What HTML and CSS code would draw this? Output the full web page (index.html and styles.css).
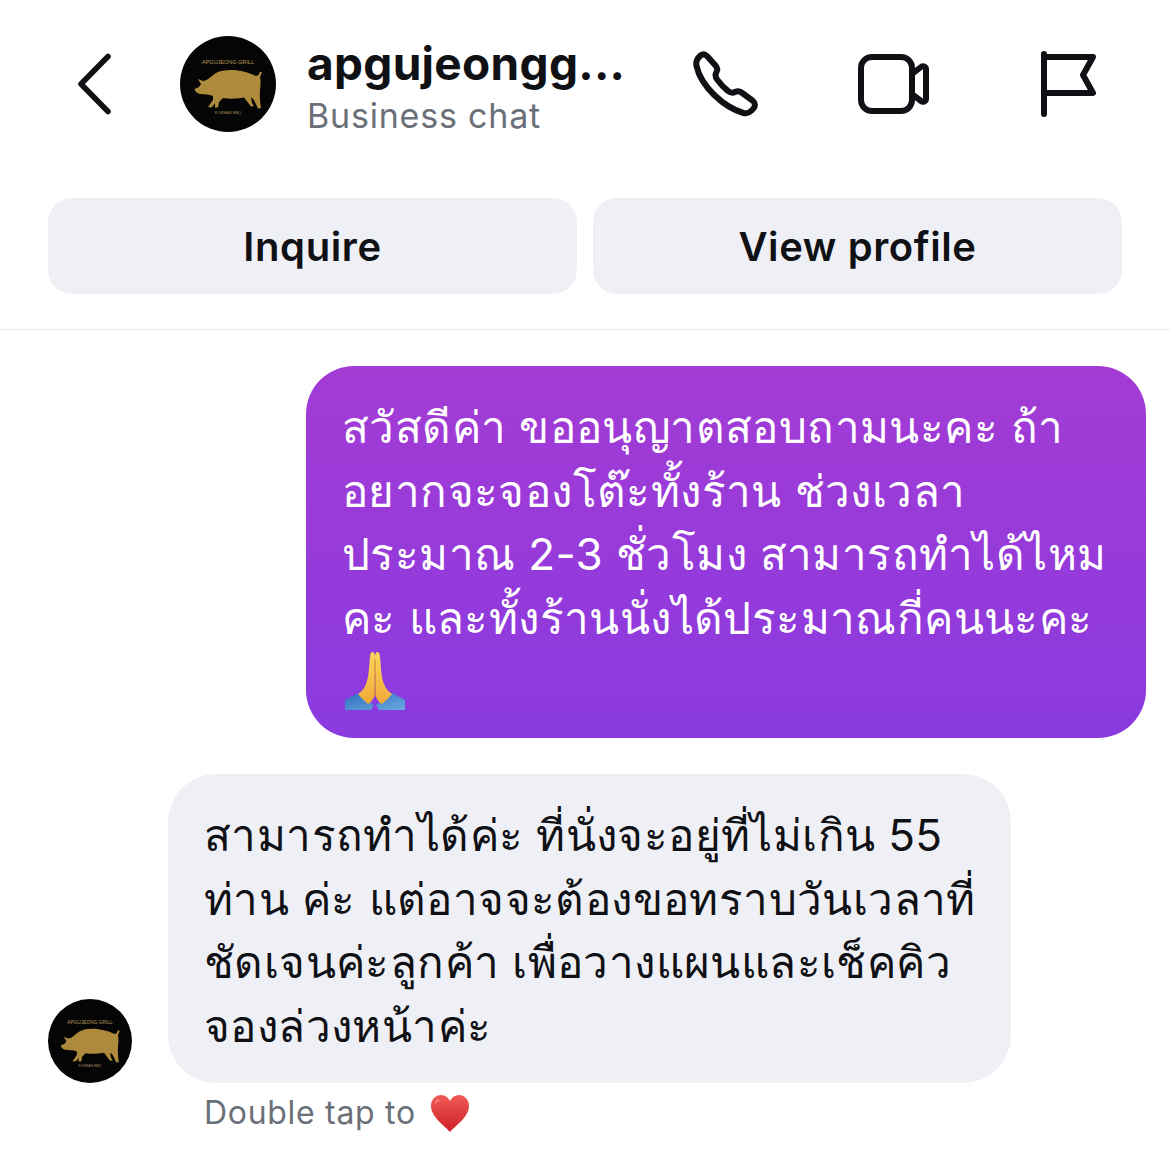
FILE: index.html
```html
<!DOCTYPE html>
<html lang="en">
<head>
    <meta charset="UTF-8">
    <meta name="viewport" content="width=device-width, initial-scale=1.0">
    <title>Business chat</title>
    <link rel="stylesheet" href="styles.css">
</head>
<body>
    <header class="topbar">
        <svg class="back-icon" width="36" height="62" viewBox="0 0 36 62">
            <path d="M31 3.5 4 31l27 27.5"/>
        </svg>
        <svg class="avatar-large" width="96" height="96" viewBox="0 0 96 96">
            <circle cx="48" cy="48" r="48" fill="#050505"/>
            <text x="48" y="28" class="logo-top" text-anchor="middle">APGUJEONG GRILL</text>
            <path class="pig" d="M14.5 53 19 51l2-3-3-5 5 2c4 0 7-4 13-8 6-3 14-3.500 22-2.500 8 1 14 3.500 18 5.500l2.500-1 1.500-3.500 2 1-2 4.500c1 4 .5 9 0 13-.5 6 0 12 1 18l-3 .5-4-8.500-3-3 1 6 2 3-3 .5-7-9c-8 1.500-15 1.500-21 .5l-4 4-1 5.500h-3V67l-2 3-2 1.500-3-.5 5-7v-4c-4-2-9-1.500-13-2-3-.5-5-2.500-5.500-5z"/>
            <text x="48" y="78" class="logo-bottom" text-anchor="middle">KOREAN BBQ</text>
        </svg>
        <div class="title-block">
            <div class="title">apgujeongg...</div>
            <div class="subtitle">Business chat</div>
        </div>
        <div class="actions">
            <svg class="icon" width="66" height="66" viewBox="0 0 66 66">
                <path d="M7.500 4.500C9.500 3 12 3 14 5l8.500 9.500c2 2.200 2.300 4.300 1 6.500-1.500 2.500-1 5.500 1 8 3 4 6.500 8 10.500 11 2.500 2 5 2 7 1s4.500-1 6.500.5l11 8c3 2.500 3 5.500 1 8L58 60c-2 2-4.500 2.800-7.500 2C30 56 8 35 3.500 15c-.7-3.500.5-7.500 4-10.500z"/>
            </svg>
            <svg class="icon" width="71" height="60" viewBox="0 0 71 60">
                <rect x="3" y="3" width="51" height="54" rx="11"/>
                <path d="M54 20l9-7c2-1.500 5-.5 5 2.500v29c0 3-3 4-5 2.500l-9-7"/>
            </svg>
            <svg class="icon" width="55" height="66" viewBox="0 0 55 66">
                <path d="M3 3v60M3 6h49l-10 18 10 18H3"/>
            </svg>
        </div>
    </header>

    <div class="buttons">
        <div class="btn">Inquire</div>
        <div class="btn">View profile</div>
    </div>

    <main class="chat">
        <div class="bubble bubble-out">
            สวัสดีค่า ขออนุญาตสอบถามนะคะ ถ้า<br>
            อยากจะจองโต๊ะทั้งร้าน ช่วงเวลา<br>
            ประมาณ 2-3 ชั่วโมง สามารถทำได้ไหม<br>
            คะ และทั้งร้านนั่งได้ประมาณกี่คนนะคะ<br>
            <svg class="pray" width="60" height="59" viewBox="0 0 60 59">
                <defs>
                    <linearGradient id="hand" x1="0" y1="0" x2="0" y2="1">
                        <stop offset="0" stop-color="#fbd65a"/>
                        <stop offset="1" stop-color="#f2a93a"/>
                    </linearGradient>
                    <linearGradient id="sleeve" x1="0" y1="0" x2="1" y2="1">
                        <stop offset="0" stop-color="#2f6fc0"/>
                        <stop offset="1" stop-color="#6aa8e0"/>
                    </linearGradient>
                </defs>
                <path fill="url(#sleeve)" d="M0 49l13-7 16 12-3 5H0zM60 49l-13-7-16 12 3 5h26z"/>
                <path fill="url(#hand)" d="M27.500 1C26 1 25 3 25 6c-1 9-1 20-4 27-2 5-5 8-8 10 3 4 7 7 10 10 2-1 5-4 6.500-8L30 6c0-3-1-5-2.500-5z"/>
                <path fill="url(#hand)" d="M32.500 1C34 1 35 3 35 6c1 9 1 20 4 27 2 5 5 8 8 10-3 4-7 7-10 10-2-1-5-4-6.500-8L30 6c0-3 1-5 2.500-5z"/>
                <path fill="none" stroke="#d98a2a" stroke-width="1" d="M30 8v37"/>
            </svg>
        </div>

        <div class="incoming">
            <svg class="avatar-small" width="84" height="84" viewBox="0 0 96 96">
                <circle cx="48" cy="48" r="48" fill="#050505"/>
                <text x="48" y="28" class="logo-top" text-anchor="middle">APGUJEONG GRILL</text>
                <path class="pig" d="M14.5 53 19 51l2-3-3-5 5 2c4 0 7-4 13-8 6-3 14-3.500 22-2.500 8 1 14 3.500 18 5.500l2.500-1 1.500-3.500 2 1-2 4.500c1 4 .5 9 0 13-.5 6 0 12 1 18l-3 .5-4-8.500-3-3 1 6 2 3-3 .5-7-9c-8 1.500-15 1.500-21 .5l-4 4-1 5.500h-3V67l-2 3-2 1.500-3-.5 5-7v-4c-4-2-9-1.500-13-2-3-.5-5-2.500-5.500-5z"/>
                <text x="48" y="78" class="logo-bottom" text-anchor="middle">KOREAN BBQ</text>
            </svg>
            <div class="bubble bubble-in">
                สามารถทำได้ค่ะ ที่นั่งจะอยู่ที่ไม่เกิน 55<br>
                ท่าน ค่ะ แต่อาจจะต้องขอทราบวันเวลาที่<br>
                ชัดเจนค่ะลูกค้า เพื่อวางแผนและเช็คคิว<br>
                จองล่วงหน้าค่ะ
            </div>
        </div>

        <div class="hint">
            Double tap to
            <svg class="heart" width="40" height="40" viewBox="0 0 40 40">
                <defs>
                    <linearGradient id="red" x1="0" y1="0" x2="0" y2="1">
                        <stop offset="0" stop-color="#ef5a55"/>
                        <stop offset="1" stop-color="#cf1f26"/>
                    </linearGradient>
                </defs>
                <path fill="url(#red)" d="M20 39C15 33 1 24 1 13 1 6 6 2 11 2c4 0 7 2 9 6 2-4 5-6 9-6 5 0 10 4 10 11 0 11-14 20-19 26z"/>
                <path fill="#f79a92" opacity=".7" d="M8 6c-2 1-3.500 3-3.500 6 1.500-2 3-3.500 5.500-4z"/>
            </svg>
        </div>
    </main>
</body>
</html>
```

FILE: styles.css
```css
* {
    margin: 0;
    padding: 0;
    box-sizing: border-box;
}

body {
    font-family: Inter, "Noto Sans", "Liberation Sans", sans-serif;
    background: #fff;
    color: #0f1115;
    width: 1170px;
    height: 1155px;
    overflow: hidden;
}

.logo-top {
    font-size: 5.5px;
    fill: #b89a58;
    font-family: "Liberation Sans", sans-serif;
}

.logo-bottom {
    font-size: 4px;
    fill: #a08a5a;
    font-family: "Liberation Sans", sans-serif;
}

.pig {
    fill: #ae8a3c;
}

/* Top bar */
.topbar {
    display: flex;
    align-items: center;
    height: 168px;
    padding-left: 77px;
}

.back-icon {
    fill: none;
    stroke: #0f1115;
    stroke-width: 5.5;
    stroke-linecap: round;
    stroke-linejoin: round;
    margin-right: 67px;
}

.title-block {
    margin: 5px 0 0 31px;
    width: 360px;
}

.title {
    font-size: 46px;
    font-weight: 700;
    line-height: 54px;
    letter-spacing: 0.3px;
}

.subtitle {
    font-size: 34px;
    line-height: 44px;
    letter-spacing: 0.8px;
    color: #6b7078;
    margin-top: 4px;
}

.actions {
    display: flex;
    align-items: center;
    margin-left: 26px;
}

.icon {
    fill: none;
    stroke: #0f1115;
    stroke-width: 6;
    stroke-linecap: round;
    stroke-linejoin: round;
}

.actions .icon:nth-child(2) {
    margin-left: 99px;
}

.actions .icon:nth-child(3) {
    margin-left: 112px;
}

/* Buttons */
.buttons {
    display: flex;
    gap: 16px;
    padding: 30px 48px 35px;
    border-bottom: 1px solid #e8e8ea;
}

.btn {
    flex: 1;
    height: 96px;
    display: flex;
    align-items: center;
    justify-content: center;
    background: #eff0f5;
    border-radius: 24px;
    font-size: 40px;
    font-weight: 600;
    letter-spacing: 0.6px;
}

/* Messages */
.chat {
    padding: 36px 24px 0 48px;
}

.bubble {
    font-size: 44px;
    line-height: 63.5px;
    letter-spacing: 0.4px;
    border-radius: 48px;
    white-space: nowrap;
}

.bubble-out {
    width: 840px;
    height: 372px;
    margin-left: auto;
    padding: 30px 36px;
    color: #fff;
    background: linear-gradient(180deg, #a33bd4 0%, #8a3ae0 100%);
}

.pray {
    display: block;
    margin: 1px 0 0 3px;
}

.incoming {
    display: flex;
    align-items: flex-end;
    gap: 36px;
    margin-top: 36px;
}

.avatar-small {
    flex: none;
}

.bubble-in {
    width: 843px;
    height: 309px;
    padding: 30px 36px;
    background: #eff0f5;
}

.hint {
    display: flex;
    align-items: center;
    gap: 14px;
    margin: 10px 0 0 156px;
    font-size: 32px;
    line-height: 40px;
    letter-spacing: 0.7px;
    color: #6b7078;
}
```
